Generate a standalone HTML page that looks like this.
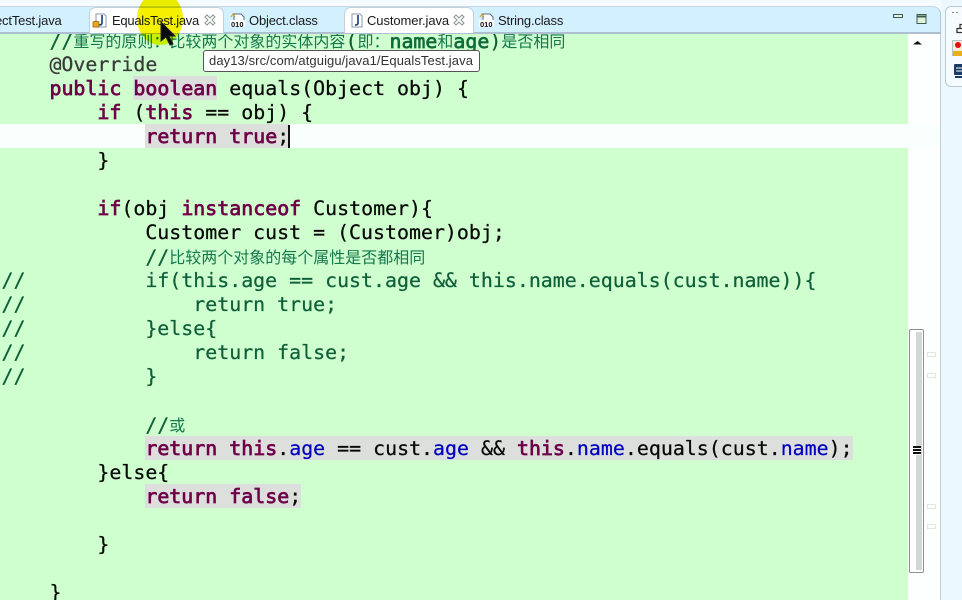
<!DOCTYPE html>
<html>
<head>
<meta charset="utf-8">
<style>
html,body{margin:0;padding:0;background:#fff}
#root{position:relative;width:962px;height:600px;overflow:hidden;background:#f9fdff;font-family:"Liberation Sans","Noto Sans CJK SC",sans-serif}
.abs{position:absolute}
#code{position:absolute;left:0;top:34px;width:908px;height:566px;background:#cfffcf;overflow:hidden}
.l{position:absolute;left:1.500px;height:24px;line-height:26px;white-space:pre;font-family:"DejaVu Sans Mono","Noto Sans CJK SC",monospace;font-size:19.91px;color:#080808;-webkit-text-stroke:.25px currentColor}
.k{color:#6f0048;-webkit-text-stroke:.75px currentColor}
.c{color:#0f5f3a}
.f{color:#0000c0}
.m{display:inline-block;height:24px;line-height:26px;vertical-align:top;background:#dcdfdc}
.z{position:relative;top:-1px;font-family:"Noto Sans CJK SC",sans-serif;font-size:16px;letter-spacing:0;color:#15784c;-webkit-text-stroke:0}
.g{-webkit-text-stroke:.7px currentColor;color:#0f6b3a}
.tb{position:absolute;top:13px;font-size:13px;line-height:16px;color:#1a1a1a;white-space:nowrap}
</style>
</head>
<body>
<div id="root">
  <!-- tab bar -->
  <div class="abs" style="left:0;top:0;width:962px;height:6px;background:#f5fbff"></div>
  <div class="abs" style="left:0;top:6px;width:941px;height:26px;background:#d3f0fe;border-top:1px solid #c6d8e6;border-right:1px solid #b9c8d6;border-top-right-radius:8px;box-sizing:border-box"></div>
  <div class="abs" style="left:0;top:32px;width:941px;height:2px;background:#aebfd2"></div>

  <div class="abs" style="left:89px;top:7px;width:135px;height:26px;background:#fff;border:1px solid #c6d0da;border-bottom:0;border-radius:7px 7px 0 0;box-sizing:border-box"></div>
  <div class="abs" style="left:344px;top:7px;width:130px;height:26px;background:#fff;border:1px solid #c6d0da;border-bottom:0;border-radius:7px 7px 0 0;box-sizing:border-box"></div>

  <div class="tb" style="left:-5px;letter-spacing:-.17px">ectTest.java</div>
  <div class="tb" style="left:112px;letter-spacing:-.27px">EqualsTest.java</div>
  <div class="tb" style="left:249px;letter-spacing:-.17px">Object.class</div>
  <div class="tb" style="left:367px;letter-spacing:-.08px">Customer.java</div>
  <div class="tb" style="left:498px;letter-spacing:-.17px">String.class</div>

  <svg class="abs" style="left:0;top:0" width="962" height="34" fill="none">
    <!-- Java file icons -->
    <path d="M96 14h8l2 2v11H96z" fill="#fff" stroke="#8a9aae"/>
    <path d="M102 15v8q0 2-3 2" stroke="#1a3a78" stroke-width="1.6"/>
    <path d="M93 22l3-1 3 1v5h-6z" fill="#e8a818" stroke="#8a5a10" stroke-width=".7"/>
    <path d="M352 14h8l2 2v11H352z" fill="#fff" stroke="#8a9aae"/>
    <path d="M358 15v8q0 2-3 2" stroke="#1a3a78" stroke-width="1.6"/>
    <!-- class file icons -->
    <path d="M234 14h7l3 3v9h-10z" fill="#fff" stroke="#5a6a80"/>
    <path d="M231 17l2-3 2 3" stroke="#c89820"/>
    <rect x="230" y="20" width="15" height="7" fill="#fff"/>
    <text x="231" y="27" font-family="Liberation Sans" font-size="7.500" font-weight="bold" fill="#111">010</text>
    <path d="M483 14h7l3 3v9h-10z" fill="#fff" stroke="#5a6a80"/>
    <path d="M480 17l2-3 2 3" stroke="#c89820"/>
    <rect x="479" y="20" width="15" height="7" fill="#fff"/>
    <text x="480" y="27" font-family="Liberation Sans" font-size="7.500" font-weight="bold" fill="#111">010</text>
    <!-- close icons -->
    <path d="M207 15l3 3 3-3 2 2-3 3 3 3-2 2-3-3-3 3-2-2 3-3-3-3z" fill="#fff" stroke="#88968e"/>
    <path d="M456 15l3 3 3-3 2 2-3 3 3 3-2 2-3-3-3 3-2-2 3-3-3-3z" fill="#fff" stroke="#88968e"/>
    <!-- min / max -->
    <rect x="893.500" y="14.500" width="9" height="3" fill="#dff2da" stroke="#3c5a50"/>
    <rect x="917" y="14.500" width="9" height="9" fill="#dff2da" stroke="#3c5a50"/>
    <path d="M917 16.500h9" stroke="#3c5a50" stroke-width="2"/>
  </svg>

  <!-- code -->
  <div id="code">
    <div class="abs" style="left:0;top:90px;width:908px;height:24px;background:#f8fffc"></div>
    <div class="l c" style="top:-6px">    //<span class="z">重写的原则：比较两个对象的实体内容</span>(<span class="z">即：</span><span class="g">name</span><span class="z">和</span><span class="g">age</span>)<span class="z">是否相同</span></div>
    <div class="l" style="top:18px;color:#3a3a3a">    @Override</div>
    <div class="l" style="top:42px">    <span class="k">public</span> <span class="k m">boolean</span> equals(Object obj) {</div>
    <div class="l" style="top:66px">        <span class="k">if</span> (<span class="k">this</span> == obj) {</div>
    <div class="l" style="top:90px">            <span class="m"><span class="k">return</span> <span class="k">true</span>;</span></div>
    <div class="abs" style="left:288px;top:91px;width:2px;height:23px;background:#111"></div>
    <div class="l" style="top:114px">        }</div>
    <div class="l" style="top:162px">        <span class="k">if</span>(obj <span class="k">instanceof</span> Customer){</div>
    <div class="l" style="top:186px">            Customer cust = (Customer)obj;</div>
    <div class="l c" style="top:210px">            //<span class="z">比较两个对象的每个属性是否都相同</span></div>
    <div class="l c" style="top:234px">//          if(this.age == cust.age &amp;&amp; this.name.equals(cust.name)){</div>
    <div class="l c" style="top:258px">//              return true;</div>
    <div class="l c" style="top:282px">//          }else{</div>
    <div class="l c" style="top:306px">//              return false;</div>
    <div class="l c" style="top:330px">//          }</div>
    <div class="l c" style="top:378px">            //<span class="z">或</span></div>
    <div class="l" style="top:402px">            <span class="m"><span class="k">return</span> <span class="k">this</span>.<span class="f">age</span> == cust.<span class="f">age</span> &amp;&amp; <span class="k">this</span>.<span class="f">name</span>.equals(cust.<span class="f">name</span>);</span></div>
    <div class="l" style="top:426px">        }else{</div>
    <div class="l" style="top:450px">            <span class="m"><span class="k">return</span> <span class="k">false</span>;</span></div>
    <div class="l" style="top:498px">        }</div>
    <div class="l" style="top:546px">    }</div>
  </div>

  <!-- scrollbar / overview -->
  <div class="abs" style="left:908px;top:34px;width:33px;height:566px;background:#fdfefe"></div>
  <div class="abs" style="left:908px;top:124px;width:33px;height:24px;background:#f8fffc"></div>
  <svg class="abs" style="left:908px;top:34px" width="34" height="566">
    <path d="M5 10.500l4.500-3.500 4.500 3.500z" fill="#111"/>
    <path d="M32.500 0v566" stroke="#c8ccce"/>
  </svg>
  <div class="abs" style="left:909px;top:329px;width:15px;height:244px;box-sizing:border-box;border:1px solid #8b928e;border-radius:2px;background:#fff"></div>
  <div class="abs" style="left:916px;top:332px;width:6px;height:238px;background:#d2d8d8"></div>
  <div class="abs" style="left:913px;top:446px;width:8px;height:9px;background:repeating-linear-gradient(#111 0 2px,#fff 2px 3px)"></div>
  <div class="abs" style="left:927px;top:352px;width:9px;height:5px;box-sizing:border-box;border:1px solid #e2e8e0"></div>
  <div class="abs" style="left:927px;top:373px;width:9px;height:5px;box-sizing:border-box;border:1px solid #e2e8e0"></div>
  <div class="abs" style="left:927px;top:504px;width:9px;height:5px;box-sizing:border-box;border:1px solid #e2e8e0"></div>
  <div class="abs" style="left:927px;top:524px;width:9px;height:5px;box-sizing:border-box;border:1px solid #e2e8e0"></div>

  <!-- right side -->
  <div class="abs" style="left:941px;top:0;width:21px;height:600px;background:#ecf8ff"></div>
  <div class="abs" style="left:945px;top:6px;width:17px;height:81px;box-sizing:border-box;background:#f6fbff;border:1px solid #b8c8d6;border-right:0;border-radius:6px 0 0 6px"></div>
  <svg class="abs" style="left:945px;top:6px" width="17" height="81">
    <path d="M7 6.500h2M11 6.500h2" stroke="#888"/>
    <path d="M15 18.500h4v4h-4zM12 22.500h7v4h-7z" fill="#fff" stroke="#333" stroke-width="1.300"/>
    <rect x="7.500" y="34.500" width="10" height="15" fill="#f6eed8" stroke="#b8c0c8"/>
    <circle cx="13" cy="39" r="3" fill="#e01010"/>
    <path d="M8 45h9v5H8z" fill="#e8b020"/>
    <rect x="9" y="58" width="9" height="11" rx="1" fill="#1a3a68"/>
    <path d="M11 62h6M11 65h6" stroke="#fff"/>
    <path d="M10 71h8" stroke="#1a3a68" stroke-width="2"/>
  </svg>

  <!-- tooltip -->
  <div class="abs" style="left:203px;top:50px;width:277px;height:22px;box-sizing:border-box;background:#fff;border:1px solid #555;border-radius:3px;font-size:13px;letter-spacing:.09px;line-height:20px;color:#333;padding-left:5px;white-space:nowrap">day13/src/com/atguigu/java1/EqualsTest.java</div>

  <!-- highlighter cursor -->
  <div class="abs" style="left:137px;top:-8px;width:46px;height:53px;border-radius:50%;background:#f4f000;mix-blend-mode:multiply"></div>
  <svg class="abs" style="left:160px;top:21px" width="20" height="26">
    <path d="M1 1v19l5-4 4 8 3-1-4-8h6z" fill="#0a0a0a" stroke="#222"/>
  </svg>
</div>
</body>
</html>
